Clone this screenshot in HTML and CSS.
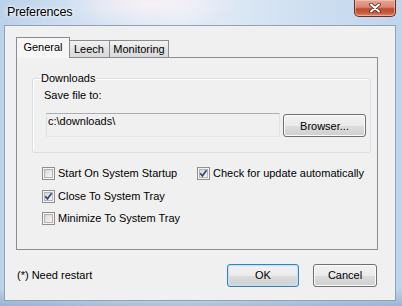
FILE: index.html
```html
<!DOCTYPE html>
<html lang="en">
<head>
    <meta charset="UTF-8">
    <title>Preferences</title>
    <link rel="stylesheet" href="styles.css">
</head>
<body>

    <div class="window">
        <!-- Barra de título -->
        <div class="titlebar">
            <span class="title">Preferences</span>
            <button class="close" type="button">
                <svg width="12" height="10" viewBox="0 0 12 10">
                    <path d="M2 1.5 L10 8.5 M10 1.5 L2 8.5" stroke="#4a2a24" stroke-width="3.6" stroke-linecap="round"/>
                    <path d="M2 1.5 L10 8.5 M10 1.5 L2 8.5" stroke="#fff" stroke-width="2" stroke-linecap="round"/>
                </svg>
            </button>
        </div>

        <div class="client">
            <div class="tabarea">
                <div class="tabs">
                    <div class="tab active">General</div>
                    <div class="tab leech">Leech</div>
                    <div class="tab monitoring">Monitoring</div>
                </div>

                <div class="panel">
                    <fieldset class="group">
                        <legend>Downloads</legend>
                        <div class="save-label">Save file to:</div>
                        <div class="path-row">
                            <div class="path">c:\downloads\</div>
                            <button class="btn browse" type="button">Browser...</button>
                        </div>
                    </fieldset>

                    <div class="options">
                        <div class="col first">
                            <label class="check"><span class="box"><span class="in"></span></span>Start On System Startup</label>
                            <label class="check"><span class="box"><span class="in"><svg width="9" height="9" viewBox="0 0 9 9"><path d="M1.2 4.2 L3.4 6.8 L7.6 1.2" fill="none" stroke="#2f4a7e" stroke-width="1.7"/></svg></span></span>Close To System Tray</label>
                            <label class="check"><span class="box"><span class="in"></span></span>Minimize To System Tray</label>
                        </div>
                        <div class="col">
                            <label class="check"><span class="box"><span class="in"><svg width="9" height="9" viewBox="0 0 9 9"><path d="M1.2 4.2 L3.4 6.8 L7.6 1.2" fill="none" stroke="#2f4a7e" stroke-width="1.7"/></svg></span></span>Check for update automatically</label>
                        </div>
                    </div>
                </div>
            </div>

            <!-- Botones inferiores -->
            <div class="footer">
                <span class="note">(*) Need restart</span>
                <button class="btn ok" type="button">OK</button>
                <button class="btn cancel" type="button">Cancel</button>
            </div>
        </div>
    </div>

</body>
</html>
```

FILE: styles.css
```css
* {
    box-sizing: border-box;
}

body {
    margin: 0;
    font-family: "Liberation Sans", Arial, sans-serif;
    font-size: 11px;
    color: #000;
}

.window {
    width: 402px;
    height: 306px;
    display: flex;
    flex-direction: column;
    overflow: hidden;
    background:
        radial-gradient(ellipse 90px 22px at 150px 4px, rgba(255, 242, 246, 0.8), rgba(255, 255, 255, 0)),
        linear-gradient(to bottom, rgba(255, 255, 255, 0) 94%, rgba(120, 150, 190, 0.5) 100%),
        linear-gradient(to right, #bcd2ea 0%, #d6e4f3 25%, #e4edf7 45%, #d3e2f2 70%, #bfd5ec 100%);
}

.titlebar {
    height: 25px;
    display: flex;
    align-items: flex-start;
}

.title {
    margin: 5px 0 0 7px;
    font-size: 12.5px;
    line-height: 14px;
    letter-spacing: -0.2px;
    text-shadow: 0 0 5px #fff, 0 0 3px #fff;
}

.close {
    margin: 0 6px 0 auto;
    width: 42px;
    height: 17px;
    padding: 0;
    border: 1px solid #6b2b22;
    border-top: none;
    border-radius: 0 0 5px 5px;
    background: linear-gradient(#e7a796 0%, #d98672 45%, #c24a2f 55%, #c65a3c 80%, #e08d6c 100%);
    box-shadow: inset 0 0 0 1px rgba(255, 210, 200, 0.5);
    display: flex;
    align-items: center;
    justify-content: center;
}

.client {
    flex: 1;
    margin: 0 6px 5px 4px;
    border: 1px solid #8fa2b8;
    background: #f0f0f0;
    display: flex;
    flex-direction: column;
}

.tabarea {
    padding: 11px 0 0 11px;
}

.tabs {
    display: flex;
    align-items: flex-end;
    height: 21px;
}

.tab {
    height: 17px;
    margin-bottom: 1px;
    border: 1px solid #898c95;
    border-bottom: none;
    background: linear-gradient(#f2f2f2, #e3e3e3 50%, #dadada);
    text-align: center;
    line-height: 16px;
}

.tab.active {
    position: relative;
    z-index: 1;
    width: 54px;
    height: 21px;
    margin-bottom: 0;
    background: #f6f6f6;
    line-height: 18px;
}

.tab.leech {
    width: 41px;
    margin-left: -1px;
    border-left: none;
}

.tab.monitoring {
    width: 60px;
    margin-left: -1px;
}

.panel {
    width: 362px;
    height: 193px;
    margin-top: -1px;
    border: 1px solid #898c95;
    background: #f0f0f0;
    display: flex;
    flex-direction: column;
}

.group {
    width: 339px;
    margin: 14px 0 0 15px;
    padding: 0 4px 15px 11px;
    border: 1px solid #d5dfe5;
    border-radius: 3px;
    box-shadow: inset 1px 1px 0 #fff;
    min-width: 0;
}

.group legend {
    margin-left: -4px;
    padding: 0 1px;
    line-height: 13px;
}

.save-label {
    margin-top: 4px;
    line-height: 13px;
}

.path-row {
    display: flex;
    align-items: flex-start;
    margin: 11px 0 0 2px;
}

.path {
    width: 234px;
    height: 24px;
    padding: 1px 1px;
    border: 1px solid;
    border-color: #abadb3 #e2e3ea #e3e9ef #dbdfe6;
    background: #f0f0f0;
    line-height: 13px;
}

.btn {
    height: 23px;
    padding: 0;
    border: 1px solid #707070;
    border-radius: 3px;
    background: linear-gradient(#f2f2f2 0%, #ebebeb 50%, #dddddd 51%, #cfcfcf 100%);
    box-shadow: inset 0 0 0 1px #fbfbfb;
    font: inherit;
    color: #000;
}

.browse {
    width: 83px;
    margin: 1px 0 0 3px;
}

.options {
    display: flex;
    margin: 14px 0 0 25px;
}

.col {
    display: flex;
    flex-direction: column;
    gap: 9.5px;
}

.col.first {
    width: 155px;
}

.check {
    display: flex;
    align-items: center;
    gap: 3px;
    height: 13px;
    line-height: 13px;
    white-space: nowrap;
}

.box {
    width: 13px;
    height: 13px;
    padding: 1px;
    border: 1px solid #8f8f8f;
    background: #f4f4f4;
    flex: none;
}

.box .in {
    display: block;
    width: 9px;
    height: 9px;
    border: 1px solid #b4b4b4;
    background: linear-gradient(135deg, #d6d6d6, #f8f8f8);
    position: relative;
}

.box svg {
    position: absolute;
    left: -1px;
    top: -1px;
}

.footer {
    flex: 1;
    display: flex;
    align-items: center;
    padding: 0 18px 0 12px;
}

.ok {
    width: 72px;
    margin-left: auto;
    border-color: #3c7fb1;
    box-shadow: inset 0 0 0 1px #bfe3f6, inset 0 0 2px 1px #c9ecfb;
}

.cancel {
    width: 64px;
    margin-left: 14px;
}
```
